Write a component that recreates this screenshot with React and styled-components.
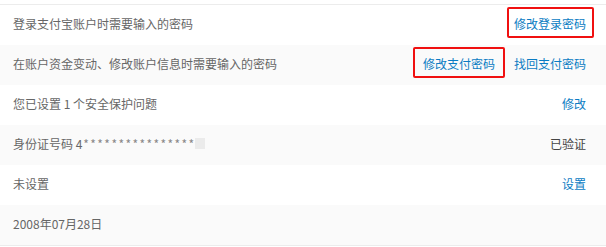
import React from "react";
import styled, { createGlobalStyle } from "styled-components";

const Global = createGlobalStyle`
  body {
    margin: 0;
    background: #fff;
    font-family: "Noto Sans CJK SC", "Liberation Sans", sans-serif;
    font-size: 12px;
  }
`;

const rows = [
  { label: "登录支付宝账户时需要输入的密码", links: [{ text: "修改登录密码", mark: "first" }] },
  {
    label: "在账户资金变动、修改账户信息时需要输入的密码",
    links: [{ text: "修改支付密码", mark: "second" }, { text: "找回支付密码" }],
  },
  { label: "您已设置 1 个安全保护问题", links: [{ text: "修改" }] },
  { label: "id", status: "已验证" },
  { label: "未设置", links: [{ text: "设置" }] },
  { label: "2008年07月28日" },
];

const marks = {
  first: { top: -11, bottom: -8, left: -7, right: -8 },
  second: { top: -11, bottom: -8, left: -10, right: -10 },
};

const App = () => {
  return (
    <>
      <Global />
      <Table>
        {rows.map((row, i) => (
          <Row key={i} $odd={i % 2 === 1}>
            <Label>
              {row.label === "id" ? (
                <>
                  身份证号码 4<Stars>****************</Stars>
                  <Mask />
                </>
              ) : (
                row.label
              )}
            </Label>
            <Actions>
              {row.status && <Status>{row.status}</Status>}
              {row.links &&
                row.links.map((l) => (
                  <Action key={l.text} href="#" $mark={marks[l.mark]}>
                    {l.text}
                  </Action>
                ))}
            </Actions>
          </Row>
        ))}
      </Table>
    </>
  );
};

export default App;

const Table = styled.div`
  margin-top: 4px;
  border-top: 1px solid #ececec;
  border-bottom: 1px solid #ececec;
`;

const Row = styled.div`
  display: flex;
  align-items: center;
  justify-content: space-between;
  height: 40px;
  padding: 0 20px 0 13px;
  background: ${(p) => (p.$odd ? "#fafafa" : "#fff")};
`;

const Label = styled.span`
  display: flex;
  align-items: center;
  color: #666;
  line-height: 12px;
  margin-top: -3px;
`;

const Stars = styled.span`
  color: #888;
  letter-spacing: 1.4px;
  margin-left: 1px;
`;

const Mask = styled.span`
  display: inline-block;
  width: 10px;
  height: 11px;
  background: #ebebeb;
`;

const Actions = styled.div`
  display: flex;
  align-items: center;
  gap: 19px;
  margin-top: -3px;
`;

const Status = styled.span`
  color: #444;
  line-height: 12px;
`;

const Action = styled.a`
  position: relative;
  color: #0b7cc3;
  text-decoration: none;
  line-height: 12px;
  &::after {
    content: "";
    display: ${(p) => (p.$mark ? "block" : "none")};
    position: absolute;
    top: ${(p) => (p.$mark ? p.$mark.top : 0)}px;
    bottom: ${(p) => (p.$mark ? p.$mark.bottom : 0)}px;
    left: ${(p) => (p.$mark ? p.$mark.left : 0)}px;
    right: ${(p) => (p.$mark ? p.$mark.right : 0)}px;
    border: 2px solid #f01010;
    border-radius: 2px;
  }
`;
